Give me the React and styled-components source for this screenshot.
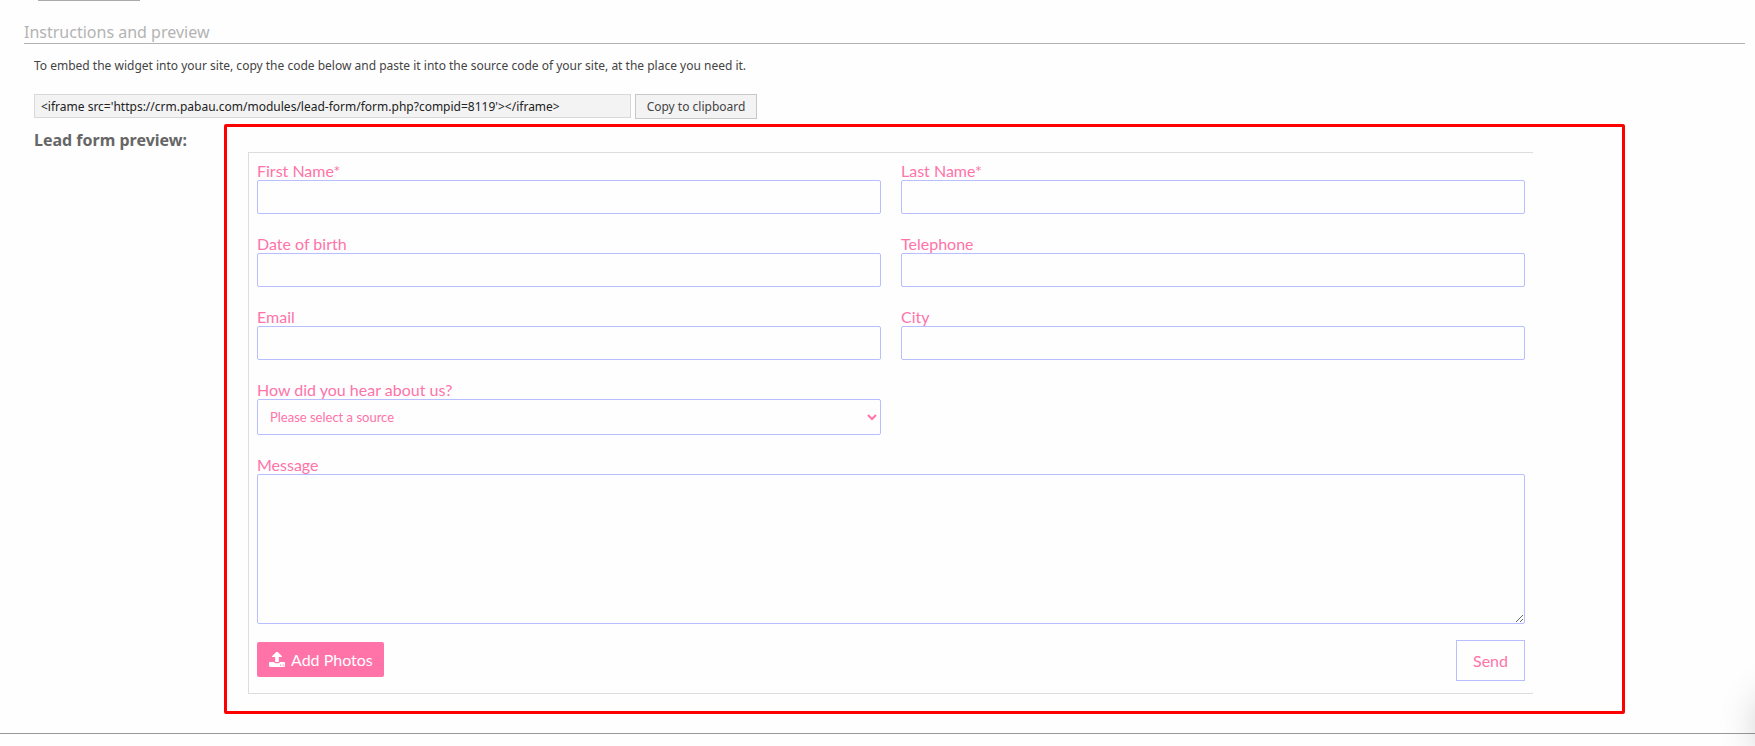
import React, { useState } from 'react';
import styled, { createGlobalStyle } from 'styled-components';

const GlobalStyle = createGlobalStyle`
  *, *::before, *::after {
    box-sizing: border-box;
  }

  body {
    margin: 0;
    background-color: #fefefe;
    font-family: Tahoma, "Noto Sans", sans-serif;
    font-size: 12px;
    color: #444;
  }
`;

const Page = styled.div`
  position: relative;
  overflow: hidden;
  padding-bottom: 12px;
`;

const PreviousButtonEdge = styled.div`
  width: 102px;
  height: 1px;
  margin-left: 38px;
  background-color: #aaa;
`;

const Section = styled.section`
  padding: 21px 10px 19px 24px;
  border-bottom: 1px solid #999;
`;

const SectionTitle = styled.h2`
  margin: 0;
  padding-bottom: 1px;
  border-bottom: 1px solid #b3b3b3;
  font-size: 16px;
  font-weight: 400;
  line-height: 20px;
  color: #b3b3b3;
`;

const SectionBody = styled.div`
  padding: 13px 0 0 10px;
`;

const Intro = styled.p`
  margin: 0 0 19px;
  line-height: 18px;
`;

const EmbedRow = styled.div`
  display: flex;
  align-items: flex-start;
  gap: 4px;
  margin-bottom: 5px;
`;

const EmbedCode = styled.input`
  flex: 0 1 597px;
  min-width: 0;
  height: 24px;
  padding: 0 6px;
  border: 1px solid #d8d8d8;
  background-color: #f3f3f3;
  font: inherit;
  color: #222;
`;

const CopyButton = styled.button`
  width: 122px;
  height: 25px;
  padding: 0;
  border: 1px solid #c8c8c8;
  background-color: #f3f3f3;
  font: inherit;
  color: #444;
  cursor: pointer;
`;

const PreviewRow = styled.div`
  display: flex;
  align-items: flex-start;
`;

const PreviewLabel = styled.h3`
  flex: 0 0 190px;
  margin: 0;
  padding-top: 5px;
  font-size: 16px;
  font-weight: 700;
  line-height: 22px;
  color: #666;
`;

const PreviewFrame = styled.div`
  flex: 1;
  min-width: 0;
  margin-right: 120px;
  padding: 25px 89px 17px 21px;
  border: 3px solid #f00;
  border-radius: 2px;
`;

const LeadForm = styled.form`
  padding: 8px 8px 12px;
  border: 1px solid #ddd;
  border-right: none;
  font-family: Lato, sans-serif;
  font-size: 16px;
  color: #ff73a9;
`;

const FieldGrid = styled.div`
  display: grid;
  grid-template-columns: 1fr 1fr;
  gap: 20px;
`;

const FieldBox = styled.div`
  grid-column: ${(props) => (props.$wide ? '1 / -1' : 'auto')};

  label {
    display: block;
    line-height: 19px;
  }

  input,
  select,
  textarea {
    display: block;
    width: 100%;
    border: 1px solid #b8beff;
    border-radius: 2px;
    background-color: transparent;
    font-family: inherit;
    font-size: 13px;
    color: #ff73a9;
    outline: none;
  }

  input {
    height: 34px;
    padding: 0 12px;
  }

  select {
    height: 36px;
    padding: 0 0 0 8px;
  }

  textarea {
    height: 150px;
    padding: 8px 12px;
    resize: vertical;
  }
`;

const FormActions = styled.div`
  display: flex;
  align-items: flex-start;
  justify-content: space-between;
  margin-top: 16px;
`;

const AddPhotosButton = styled.button`
  display: flex;
  align-items: center;
  gap: 6px;
  height: 35px;
  margin-top: 2px;
  padding: 0 11px 0 12px;
  border: none;
  border-radius: 2px;
  background-color: #ff73a9;
  font: inherit;
  color: #fff;
  cursor: pointer;
`;

const SendButton = styled.button`
  width: 69px;
  height: 41px;
  padding: 0;
  border: 1px solid #b8beff;
  background-color: transparent;
  font: inherit;
  color: #ff73a9;
  cursor: pointer;
`;

// Shadow of the chat launcher parked just outside the page
const ChatShadow = styled.div`
  position: absolute;
  right: -64px;
  bottom: -10px;
  width: 60px;
  height: 60px;
  border-radius: 50%;
  box-shadow: 0 0 40px rgba(0, 0, 0, 0.25);
`;

const UploadIcon = () => (
  <svg width="16" height="15" viewBox="64 128 1664 1536" fill="currentColor" aria-hidden="true">
    <path d="M1344 1472q0-26-19-45t-45-19-45 19-19 45 19 45 45 19 45-19 19-45zm256 0q0-26-19-45t-45-19-45 19-19 45 19 45 45 19 45-19 19-45zm128-224v320q0 40-28 68t-68 28h-1472q-40 0-68-28t-28-68v-320q0-40 28-68t68-28h427q21 56 70.500 92t110.500 36h256q61 0 110.500-36t70.500-92h427q40 0 68 28t28 68zm-325-648q-17 40-59 40h-256v448q0 26-19 45t-45 19h-256q-26 0-45-19t-19-45v-448h-256q-42 0-59-40-17-39 14-69l448-448q18-19 45-19t45 19l448 448q31 30 14 69z" />
  </svg>
);

const fields = [
  { name: 'firstName', label: 'First Name*' },
  { name: 'lastName', label: 'Last Name*' },
  { name: 'dob', label: 'Date of birth' },
  { name: 'phone', label: 'Telephone' },
  { name: 'email', label: 'Email' },
  { name: 'city', label: 'City' },
];

const embedCode =
  "<iframe src='https://crm.pabau.com/modules/lead-form/form.php?compid=8119'></iframe>";

const App = () => {
  const [values, setValues] = useState({});

  const handleChange = (e) => {
    setValues({ ...values, [e.target.name]: e.target.value });
  };

  const handleCopy = () => {
    navigator.clipboard.writeText(embedCode);
  };

  return (
    <Page>
      <GlobalStyle />
      <PreviousButtonEdge />
      <Section>
        <SectionTitle>Instructions and preview</SectionTitle>
        <SectionBody>
          <Intro>
            To embed the widget into your site, copy the code below and paste it into the source
            code of your site, at the place you need it.
          </Intro>
          <EmbedRow>
            <EmbedCode aria-label="Embed code" value={embedCode} readOnly />
            <CopyButton type="button" onClick={handleCopy}>
              Copy to clipboard
            </CopyButton>
          </EmbedRow>
          <PreviewRow>
            <PreviewLabel>Lead form preview:</PreviewLabel>
            <PreviewFrame>
              <LeadForm onSubmit={(e) => e.preventDefault()}>
                <FieldGrid>
                  {fields.map((field) => (
                    <FieldBox key={field.name}>
                      <label htmlFor={field.name}>{field.label}</label>
                      <input
                        type="text"
                        id={field.name}
                        name={field.name}
                        value={values[field.name] || ''}
                        onChange={handleChange}
                      />
                    </FieldBox>
                  ))}
                  <FieldBox>
                    <label htmlFor="source">How did you hear about us?</label>
                    <select
                      id="source"
                      name="source"
                      value={values.source || ''}
                      onChange={handleChange}
                    >
                      <option value="">Please select a source</option>
                    </select>
                  </FieldBox>
                  <FieldBox $wide>
                    <label htmlFor="message">Message</label>
                    <textarea
                      id="message"
                      name="message"
                      value={values.message || ''}
                      onChange={handleChange}
                    />
                  </FieldBox>
                </FieldGrid>
                <FormActions>
                  <AddPhotosButton type="button">
                    <UploadIcon />
                    Add Photos
                  </AddPhotosButton>
                  <SendButton type="submit">Send</SendButton>
                </FormActions>
              </LeadForm>
            </PreviewFrame>
          </PreviewRow>
        </SectionBody>
      </Section>
      <ChatShadow />
    </Page>
  );
};

export default App;
